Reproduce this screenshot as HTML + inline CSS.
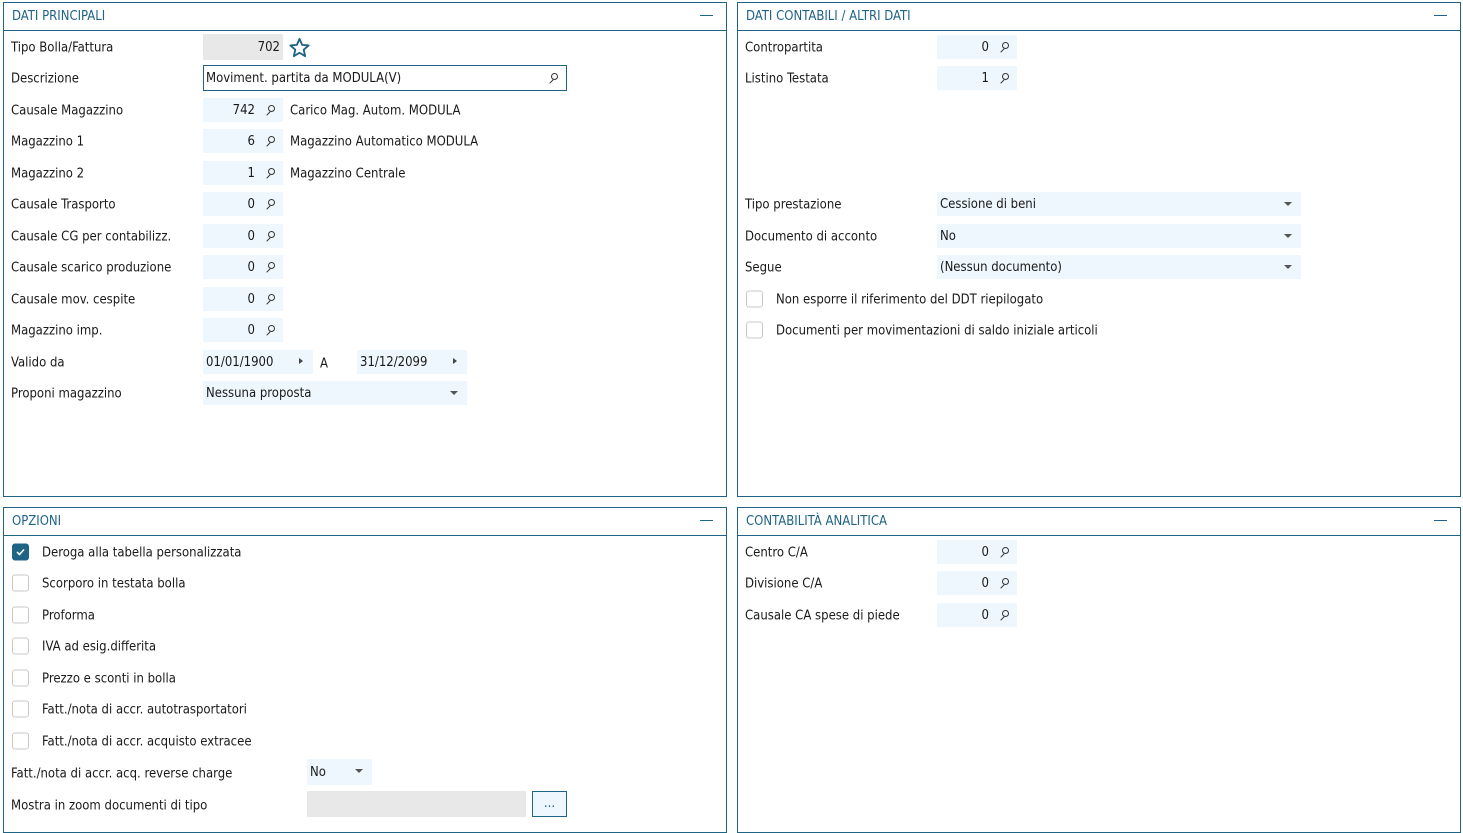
<!DOCTYPE html><html><head><meta charset="utf-8"><style>
body{margin:0;width:1463px;height:833px;background:#fff;font-family:"DejaVu Sans Condensed","Liberation Sans",sans-serif;font-size:13px;color:#1a1a1a;position:relative;overflow:hidden}
.p{position:absolute;border:1px solid #1f6385;box-sizing:border-box}
.h{position:absolute;left:0;right:0;top:0;height:27px;border-bottom:1px solid #1f6385;color:#1f6385;font-size:13px;line-height:28px;padding-left:8px}
.h i{position:absolute;right:13px;top:12px;width:13px;height:1px;background:#1f6385}
.a{position:absolute;white-space:nowrap}
.l{position:absolute;transform:translateY(-42%);white-space:nowrap}
.f{position:absolute;background:#eef7fd;height:24px;line-height:26px;box-sizing:border-box;white-space:nowrap}
.n{text-align:right;padding-right:28px}
.s::after{content:"";position:absolute;right:8px;top:7px;width:5px;height:5px;border:1.3px solid #333;border-radius:50%}
.s::before{content:"";position:absolute;right:12px;top:15px;width:5px;height:1.3px;background:#333;transform:rotate(-45deg)}
.dd::after{content:"";position:absolute;right:9px;top:10px;border:4px solid transparent;border-top:4px solid #555;border-bottom:0}
.ar::after{content:"";position:absolute;right:10px;top:8px;border:3.5px solid transparent;border-left:4px solid #444;border-right:0}
.cb{position:absolute;width:15px;height:15px;border:1px solid #c8c8c8;border-radius:3px;transform:translateY(-50%)}
</style></head><body>
<div class="p" style="left:3px;top:2px;width:724px;height:495px"><div class="h">DATI PRINCIPALI<i></i></div></div>
<div class="p" style="left:737px;top:2px;width:724px;height:495px"><div class="h">DATI CONTABILI / ALTRI DATI<i></i></div></div>
<div class="p" style="left:3px;top:507px;width:724px;height:326px"><div class="h">OPZIONI<i></i></div></div>
<div class="p" style="left:737px;top:507px;width:724px;height:326px"><div class="h">CONTABILITÀ ANALITICA<i></i></div></div>

<div class="l" style="left:11px;top:47px">Tipo Bolla/Fattura</div>
<div class="f" style="left:203px;top:34px;width:80px;height:26px;line-height:27px;background:#e8e8e8;text-align:right;padding-right:3px">702</div>
<svg class="a" style="left:288px;top:37px" width="23" height="22" viewBox="0 0 24 24"><path d="M12 2l2.9 6.6 7.1.6-5.4 4.7 1.6 7-6.2-3.7-6.2 3.7 1.6-7L2 9.2l7.1-.6z" fill="none" stroke="#1f6385" stroke-width="2" stroke-linejoin="round"/></svg>
<div class="l" style="left:11px;top:78px">Descrizione</div>
<div class="f s" style="left:203px;top:65px;width:364px;height:26px;line-height:25px;background:#fff;border:1px solid #1f6385;padding-left:2px">Moviment. partita da MODULA(V)</div>
<div class="l" style="left:11px;top:110px">Causale Magazzino</div><div class="f n s" style="left:203px;top:98px;width:80px">742</div><div class="l" style="left:290px;top:110px">Carico Mag. Autom. MODULA</div>
<div class="l" style="left:11px;top:141px">Magazzino 1</div><div class="f n s" style="left:203px;top:129px;width:80px">6</div><div class="l" style="left:290px;top:141px">Magazzino Automatico MODULA</div>
<div class="l" style="left:11px;top:173px">Magazzino 2</div><div class="f n s" style="left:203px;top:161px;width:80px">1</div><div class="l" style="left:290px;top:173px">Magazzino Centrale</div>
<div class="l" style="left:11px;top:204px">Causale Trasporto</div><div class="f n s" style="left:203px;top:192px;width:80px">0</div>
<div class="l" style="left:11px;top:236px">Causale CG per contabilizz.</div><div class="f n s" style="left:203px;top:224px;width:80px">0</div>
<div class="l" style="left:11px;top:267px">Causale scarico produzione</div><div class="f n s" style="left:203px;top:255px;width:80px">0</div>
<div class="l" style="left:11px;top:299px">Causale mov. cespite</div><div class="f n s" style="left:203px;top:287px;width:80px">0</div>
<div class="l" style="left:11px;top:330px">Magazzino imp.</div><div class="f n s" style="left:203px;top:318px;width:80px">0</div>
<div class="l" style="left:11px;top:362px">Valido da</div><div class="f ar" style="left:203px;top:350px;width:110px;padding-left:3px">01/01/1900</div><div class="l" style="left:320px;top:363px">A</div><div class="f ar" style="left:357px;top:350px;width:110px;padding-left:3px">31/12/2099</div>
<div class="l" style="left:11px;top:393px">Proponi magazzino</div><div class="f dd" style="left:203px;top:381px;width:264px;padding-left:3px">Nessuna proposta</div>

<div class="l" style="left:745px;top:47px">Contropartita</div><div class="f n s" style="left:937px;top:35px;width:80px">0</div>
<div class="l" style="left:745px;top:78px">Listino Testata</div><div class="f n s" style="left:937px;top:66px;width:80px">1</div>
<div class="l" style="left:745px;top:204px">Tipo prestazione</div><div class="f dd" style="left:937px;top:192px;width:364px;padding-left:3px">Cessione di beni</div>
<div class="l" style="left:745px;top:236px">Documento di acconto</div><div class="f dd" style="left:937px;top:224px;width:364px;padding-left:3px">No</div>
<div class="l" style="left:745px;top:267px">Segue</div><div class="f dd" style="left:937px;top:255px;width:364px;padding-left:3px">(Nessun documento)</div>
<div class="cb" style="left:746px;top:299px"></div><div class="l" style="left:776px;top:299px">Non esporre il riferimento del DDT riepilogato</div>
<div class="cb" style="left:746px;top:330px"></div><div class="l" style="left:776px;top:330px">Documenti per movimentazioni di saldo iniziale articoli</div>

<div class="cb" style="left:12px;top:552px;background:#1f6385;border-color:#1f6385"><svg width="15" height="15" style="position:absolute;left:0;top:0"><path d="M4 7.5l2.5 2.5 4.5-5" fill="none" stroke="#fff" stroke-width="1.6"/></svg></div><div class="l" style="left:42px;top:552px">Deroga alla tabella personalizzata</div>
<div class="cb" style="left:12px;top:583px"></div><div class="l" style="left:42px;top:583px">Scorporo in testata bolla</div>
<div class="cb" style="left:12px;top:615px"></div><div class="l" style="left:42px;top:615px">Proforma</div>
<div class="cb" style="left:12px;top:646px"></div><div class="l" style="left:42px;top:646px">IVA ad esig.differita</div>
<div class="cb" style="left:12px;top:678px"></div><div class="l" style="left:42px;top:678px">Prezzo e sconti in bolla</div>
<div class="cb" style="left:12px;top:709px"></div><div class="l" style="left:42px;top:709px">Fatt./nota di accr. autotrasportatori</div>
<div class="cb" style="left:12px;top:741px"></div><div class="l" style="left:42px;top:741px">Fatt./nota di accr. acquisto extracee</div>
<div class="l" style="left:11px;top:773px">Fatt./nota di accr. acq. reverse charge</div><div class="f dd" style="left:307px;top:759px;width:65px;height:26px;line-height:27px;padding-left:3px">No</div>
<div class="l" style="left:11px;top:805px">Mostra in zoom documenti di tipo</div><div class="f" style="left:307px;top:791px;width:219px;height:26px;background:#e8e8e8"></div>
<div class="f" style="left:532px;top:791px;width:35px;height:26px;line-height:24px;border:1px solid #1f6385;background:#eef7fd;text-align:center;color:#1f6385">...</div>

<div class="l" style="left:745px;top:552px">Centro C/A</div><div class="f n s" style="left:937px;top:540px;width:80px">0</div>
<div class="l" style="left:745px;top:583px">Divisione C/A</div><div class="f n s" style="left:937px;top:571px;width:80px">0</div>
<div class="l" style="left:745px;top:615px">Causale CA spese di piede</div><div class="f n s" style="left:937px;top:603px;width:80px">0</div>
</body></html>
